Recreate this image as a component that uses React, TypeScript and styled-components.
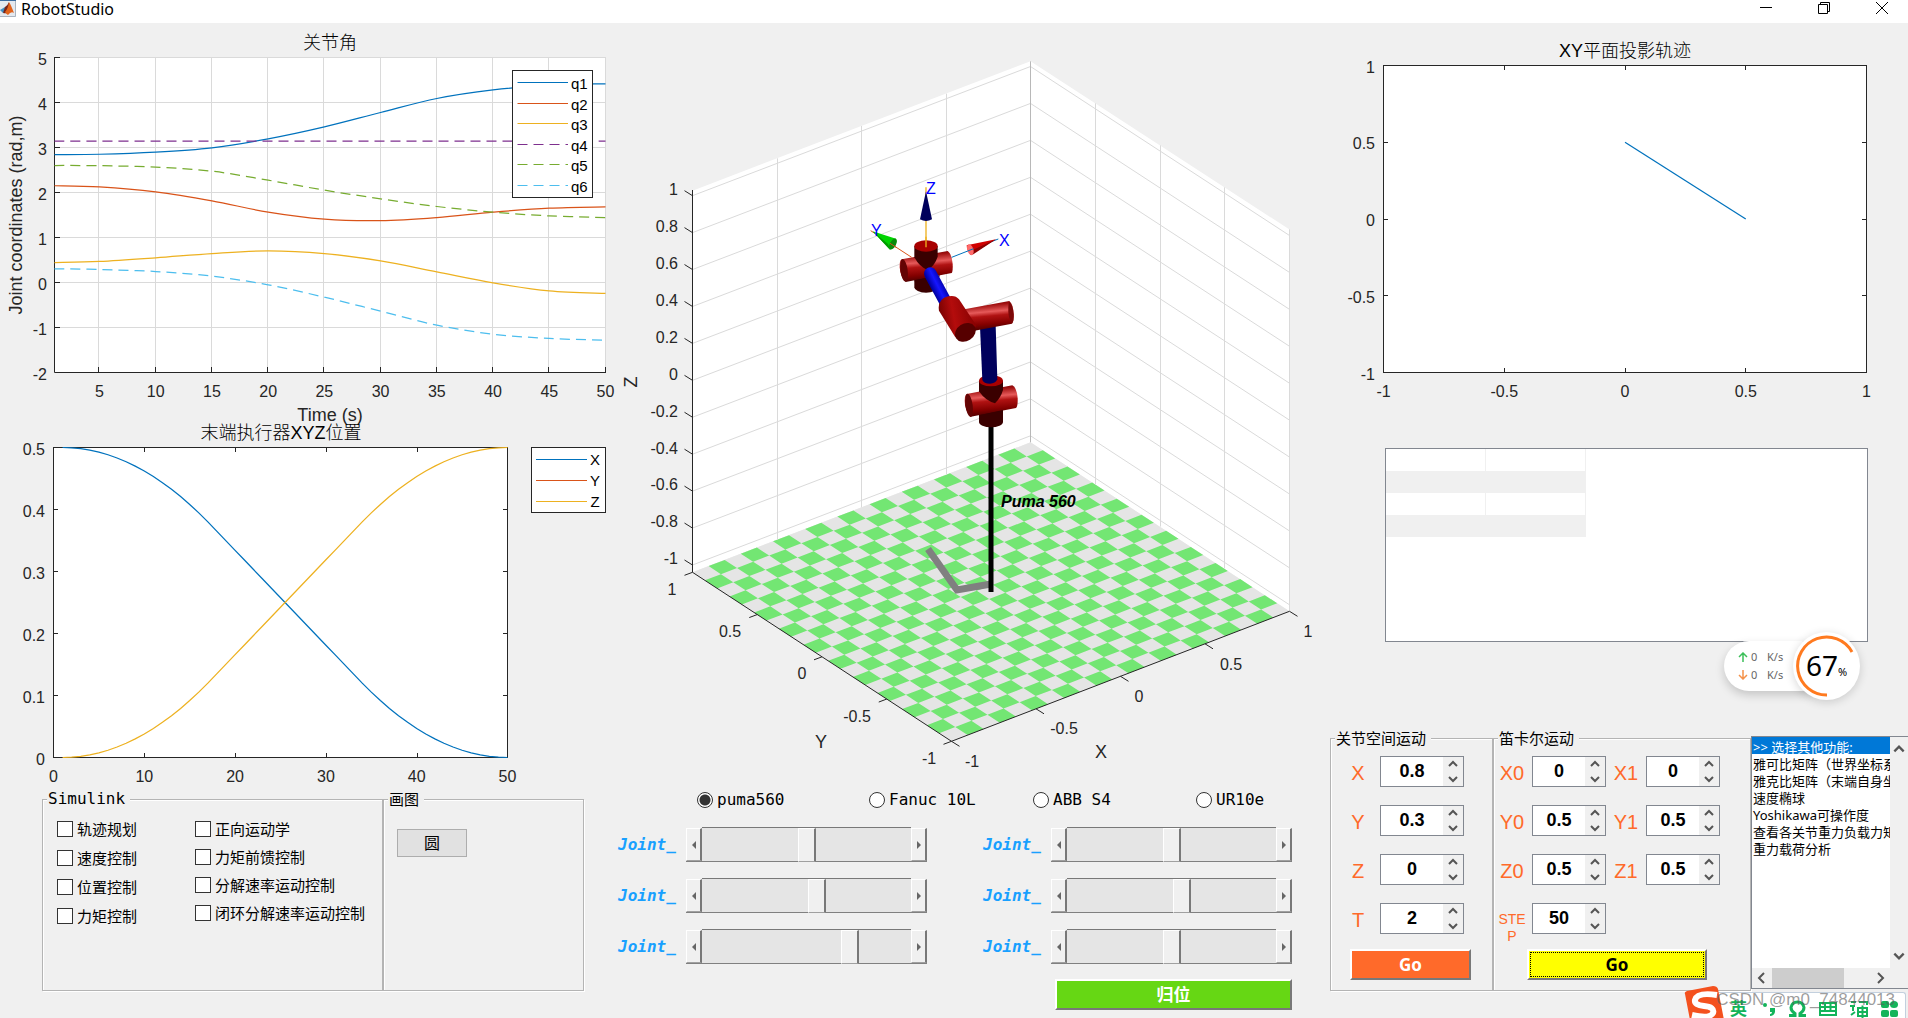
import React, { useState } from 'react';
import styled, { createGlobalStyle } from 'styled-components';

const PLOT = '"Liberation Sans", "Noto Sans CJK SC", sans-serif';
const UI = '"Noto Sans", "Noto Sans CJK SC", sans-serif';
const MONO = '"DejaVu Sans Mono", "Noto Sans CJK SC", monospace';

const BLUE = '#0072bd';
const RED = '#d95319';
const YELLOW = '#edb120';
const PURPLE = '#7e2f8e';
const GREEN = '#77ac30';
const CYAN = '#4dbeee';
const ACCENT = '#ff6a2a';

const GlobalStyle = createGlobalStyle`
  *, *::before, *::after { box-sizing: border-box; }
  body { margin: 0; background: #f0f0f0; font-family: ${UI}; color: #000; }
  button, input, select { font: inherit; color: inherit; margin: 0; }
`;

/* ---------- window frame ---------- */

const Window = styled.div`
  position: relative;
  min-height: 100vh;
  overflow: hidden;
  background: #f0f0f0;
`;

const TitleBar = styled.header`
  display: flex;
  align-items: flex-start;
  height: 23px;
  background: #fff;
`;

const AppTitle = styled.h1`
  flex: 1;
  margin: 0 0 0 5px;
  font-size: 16px;
  line-height: 18px;
  font-weight: 400;
`;

const WindowButton = styled.button`
  width: 58px;
  height: 16px;
  padding: 0 0 0 6px;
  border: 0;
  background: none;
  display: flex;
  justify-content: center;
  align-items: center;
`;

const Columns = styled.main`
  display: grid;
  grid-template-columns: minmax(0, 610fr) minmax(0, 700fr) minmax(0, 598fr);
  align-items: start;
`;

const Column = styled.section`
  display: flex;
  flex-direction: column;
`;

const Plot = styled.svg`
  display: block;
  width: 100%;
  height: auto;
  overflow: visible;
  font-family: ${PLOT};
  font-size: 16px;
  fill: #262626;
`;

/* ---------- grouped controls ---------- */

const Group = styled.fieldset`
  min-width: 0;
  margin: 0;
  padding: 0;
  border: 1px solid #b4b4b4;
  box-shadow: 1px 1px 0 #fff, inset 1px 1px 0 #fff;
`;

const Legend = styled.legend<{ $mono?: boolean }>`
  margin-left: 4px;
  padding: 0 5px 0 1px;
  background: #f0f0f0;
  font-family: ${p => (p.$mono ? MONO : UI)};
  font-size: ${p => (p.$mono ? 16 : 15)}px;
  line-height: 18px;
`;

const LeftGroups = styled.div`
  display: grid;
  grid-template-columns: 341fr 201fr;
  padding: 4px 26px 0 42px;
`;

const CheckColumns = styled.div`
  display: grid;
  grid-template-columns: 138px auto;
  padding: 12px 0 0 14px;
  height: 182px;
`;

const CheckColumn = styled.div<{ $gap: number }>`
  display: flex;
  flex-direction: column;
  gap: ${p => p.$gap}px;
`;

const Check = styled.label`
  display: flex;
  align-items: center;
  gap: 4px;
  height: 18px;
  font-size: 15px;
  line-height: 18px;
  white-space: nowrap;
  input {
    appearance: none;
    width: 16px;
    height: 16px;
    border: 1px solid #333;
    background: #fff;
  }
  input:checked { box-shadow: inset 0 0 0 3px #fff, inset 0 0 0 8px #333; }
`;

const DrawArea = styled.div`
  padding: 21px 0 0 13px;
`;

const FlatButton = styled.button`
  width: 70px;
  height: 28px;
  padding: 0;
  border: 1px solid #adadad;
  background: #e1e1e1;
  font-size: 16px;
  line-height: 24px;
`;

/* ---------- robot choice and joint sliders ---------- */

const RobotChoice = styled.div`
  display: grid;
  grid-template-columns: 172fr 164fr 163fr 114fr;
  padding: 6px 0 0 87px;
`;

const Radio = styled.label`
  display: flex;
  align-items: center;
  gap: 4px;
  height: 24px;
  font-family: ${MONO};
  font-size: 16px;
  line-height: 24px;
  white-space: nowrap;
  input {
    appearance: none;
    width: 16px;
    height: 16px;
    border: 1px solid #333;
    border-radius: 50%;
    background: #fff;
  }
  input:checked { background: radial-gradient(circle, #333 5px, #fff 6px); }
`;

const JointGrid = styled.div`
  display: grid;
  grid-template-columns: 1fr 1fr;
  gap: 16px 56px;
  padding: 15px 18px 0 8px;
`;

const JointRow = styled.div`
  display: grid;
  grid-template-columns: 68px minmax(0, 1fr);
  align-items: center;
  height: 35px;
`;

const JointLabel = styled.label`
  color: #18a0ff;
  font-family: ${MONO};
  font-size: 16px;
  font-style: italic;
  font-weight: 700;
`;

const ScrollBar = styled.div`
  display: flex;
  height: 35px;
  border-bottom: 1px solid #808080;
`;

const ScrollEnd = styled.button`
  display: flex;
  align-items: center;
  justify-content: center;
  width: 16px;
  margin-top: 1px;
  padding: 0;
  border: 1px solid #fff;
  border-right: 2px solid #787878;
  border-bottom-color: #a0a0a0;
  background: #f0f0f0;
`;

const Range = styled.input`
  appearance: none;
  flex: 1;
  min-width: 0;
  height: 34px;
  border-top: 1px solid #787878;
  background: #e5e5e5;
  &::-webkit-slider-thumb {
    appearance: none;
    width: 18px;
    height: 34px;
    border: 1px solid #fff;
    border-right: 2px solid #787878;
    border-bottom-color: #a0a0a0;
    background: #f0f0f0;
  }
`;

const RaisedButton = styled.button<{ $bg: string; $fg: string; $width: number; $dotted?: boolean }>`
  width: ${p => p.$width}px;
  height: 31px;
  padding: 0;
  border: 2px solid #fff;
  border-right-color: #787878;
  border-bottom-color: #787878;
  background: ${p => p.$bg};
  color: ${p => p.$fg};
  font-size: 17px;
  font-weight: 700;
  line-height: 20px;
  outline: ${p => (p.$dotted ? '1px dotted #000' : 'none')};
  outline-offset: -4px;
`;

const HomeRow = styled.div`
  display: flex;
  justify-content: flex-end;
  padding: 15px 18px 0 0;
`;

/* ---------- right column ---------- */

const TableFrame = styled.div`
  height: 194px;
  margin: 23px 40px 0 75px;
  border: 1px solid #828790;
  background: #fff;
`;

const DataTable = styled.table`
  border-collapse: collapse;
  table-layout: fixed;
  width: 200px;
  td {
    height: 22px;
    padding: 0;
    border-right: 1px solid #f0f0f0;
  }
  tr:nth-child(even) td { background: #f0f0f0; }
`;

const MotionRow = styled.div`
  display: grid;
  grid-template-columns: 163fr 258fr 157fr;
  padding: 87px 0 0 20px;
`;

const PoseArea = styled.div`
  height: 243px;
  padding: 9px 0 0 19px;
`;

const StartEndArea = styled.div`
  height: 243px;
  padding: 9px 0 0 4px;
`;

const PoseGrid = styled.div<{ $columns: string; $gap: number }>`
  display: grid;
  grid-template-columns: ${p => p.$columns};
  grid-auto-rows: 31px;
  gap: 18px ${p => p.$gap}px;
`;

const FieldLabel = styled.label<{ $small?: boolean }>`
  align-self: start;
  padding-top: ${p => (p.$small ? 8 : 0)}px;
  color: ${ACCENT};
  font-family: ${PLOT};
  font-size: ${p => (p.$small ? 14 : 20)}px;
  line-height: ${p => (p.$small ? 17 : 34)}px;
  text-align: center;
  word-break: break-all;
`;

const SpinFrame = styled.div`
  display: grid;
  grid-template-columns: minmax(0, 1fr) 20px;
  border: 1px solid #828790;
  background: #fff;
  input {
    appearance: textfield;
    width: 100%;
    padding: 0;
    border: 0;
    background: none;
    font-family: ${PLOT};
    font-size: 18px;
    font-weight: 700;
    text-align: center;
  }
  input::-webkit-inner-spin-button { appearance: none; }
`;

const SpinButtons = styled.div`
  display: grid;
  grid-template-rows: 1fr 1fr;
  background: #f0f0f0;
`;

const GlyphButton = styled.button`
  display: flex;
  align-items: center;
  justify-content: center;
  padding: 0;
  border: 0;
  background: none;
`;

const GoRow = styled.div<{ $indent: number }>`
  padding: 15px 0 0 ${p => p.$indent}px;
`;

const ListFrame = styled.div`
  display: grid;
  grid-template-columns: minmax(0, 1fr) 18px;
  grid-template-rows: minmax(0, 1fr) 20px;
  height: 253px;
  margin-top: 7px;
  border: 1px solid #828790;
  border-right: 0;
  background: #f0f0f0;
`;

const FunctionList = styled.select`
  width: 100%;
  height: 100%;
  padding: 0;
  border: 0;
  border-radius: 0;
  outline: 0;
  background: #fff;
  overflow: hidden;
  font-size: 13px;
  option {
    height: 17px;
    min-height: 17px;
    padding: 0 0 0 1px;
    line-height: 13px;
    overflow: hidden;
  }
  option:checked {
    background: #0078d7 linear-gradient(#0078d7, #0078d7);
    color: #fff;
    -webkit-text-fill-color: #fff;
  }
`;

const VerticalScroll = styled.div`
  display: flex;
  flex-direction: column;
  justify-content: space-between;
  padding: 5px 0;
`;

const HorizontalScroll = styled.div`
  display: grid;
  grid-template-columns: 20px 72px 1fr 20px;
`;

const ScrollThumb = styled.div`
  background: #cdcdcd;
`;

/* ---------- floating desktop widgets ---------- */

const NetWidget = styled.aside`
  position: absolute;
  top: 632px;
  right: 48px;
  display: flex;
  align-items: center;
`;

const NetPill = styled.div`
  width: 103px;
  height: 50px;
  margin-right: -34px;
  padding: 7px 0 7px 14px;
  border-radius: 25px;
  background: #fff;
  box-shadow: 0 4px 10px rgba(0, 0, 0, 0.18);
`;

const Speed = styled.div`
  display: grid;
  grid-template-columns: 13px 16px auto;
  align-items: center;
  color: #666;
  font-size: 11px;
  line-height: 18px;
`;

const Dial = styled.div`
  position: relative;
  display: flex;
  align-items: baseline;
  justify-content: center;
  width: 67px;
  height: 68px;
  border-radius: 50%;
  background: #fff;
  box-shadow: 0 2px 10px rgba(0, 0, 0, 0.16);
  font-size: 28px;
  line-height: 66px;
  svg { position: absolute; inset: 0; }
  small { font-size: 11px; }
`;

const InputBar = styled.aside`
  position: absolute;
  right: 2px;
  top: 992px;
  display: flex;
  align-items: flex-end;
  gap: 13px;
  width: 196px;
  height: 26px;
  padding: 0 6px 0 19px;
  border: 1px solid #c3d0de;
  border-bottom: 0;
  border-radius: 3px 3px 0 0;
  background: #fff;
  color: #14b45a;
  font-size: 17px;
  font-weight: 700;
  line-height: 19px;
  svg { flex: none; }
`;

const InputLogo = styled.svg`
  position: absolute;
  left: -27px;
  top: -7px;
`;

const Watermark = styled.div`
  position: absolute;
  right: 13px;
  top: 990px;
  color: rgba(90, 90, 90, 0.6);
  font-family: ${PLOT};
  font-size: 17px;
  line-height: 20px;
`;

/* ---------- helpers ---------- */

type Point = [number, number];

const linePath = (pts: Point[]) =>
  pts.map(([x, y], i) => `${i ? 'L' : 'M'}${x.toFixed(2)} ${y.toFixed(2)}`).join('');

const smoothPath = (pts: Point[]) => {
  let d = `M${pts[0][0].toFixed(2)} ${pts[0][1].toFixed(2)}`;
  for (let i = 0; i < pts.length - 1; i++) {
    const a = pts[Math.max(0, i - 1)];
    const b = pts[i];
    const c = pts[i + 1];
    const e = pts[Math.min(pts.length - 1, i + 2)];
    const c1 = [b[0] + (c[0] - a[0]) / 6, b[1] + (c[1] - a[1]) / 6];
    const c2 = [c[0] - (e[0] - b[0]) / 6, c[1] - (e[1] - b[1]) / 6];
    d += `C${[...c1, ...c2, ...c].map(n => n.toFixed(2)).join(' ')}`;
  }
  return d;
};

const Chevron = ({ dir, size = 12 }: { dir: 'up' | 'down' | 'left' | 'right'; size?: number }) => {
  const d = {
    up: 'M2 8L6 4L10 8',
    down: 'M2 4L6 8L10 4',
    left: 'M8 1L3 6L8 11',
    right: 'M4 1L9 6L4 11',
  }[dir];
  return (
    <svg width={size} height={size} viewBox="0 0 12 12" fill="none" stroke="#555" strokeWidth="2">
      <path d={d} />
    </svg>
  );
};

/* ---------- joint angle chart ---------- */

const TIMES = [1, 5, 10, 15, 20, 25, 30, 35, 40, 45, 50];

const JOINTS = [
  { name: 'q1', color: BLUE, dash: false, v: [2.844, 2.85, 2.896, 2.993, 3.193, 3.459, 3.778, 4.089, 4.28, 4.385, 4.415] },
  { name: 'q2', color: RED, dash: false, v: [2.15, 2.126, 2.015, 1.815, 1.563, 1.407, 1.375, 1.444, 1.563, 1.652, 1.68] },
  { name: 'q3', color: YELLOW, dash: false, v: [0.444, 0.467, 0.548, 0.644, 0.704, 0.644, 0.481, 0.237, -0.007, -0.185, -0.244] },
  { name: 'q4', color: PURPLE, dash: true, v: TIMES.map(() => 3.144) },
  { name: 'q5', color: GREEN, dash: true, v: [2.6, 2.596, 2.563, 2.474, 2.274, 2.052, 1.859, 1.689, 1.563, 1.481, 1.444] },
  { name: 'q6', color: CYAN, dash: true, v: [0.304, 0.289, 0.244, 0.141, -0.052, -0.326, -0.637, -0.948, -1.148, -1.244, -1.281] },
];

const JointChart = () => {
  const x = (t: number) => 54.5 + ((t - 1) / 49) * 551;
  const y = (v: number) => 57.5 + (5 - v) * 45;
  return (
    <Plot viewBox="0 23 610 402" role="img" aria-label="关节角">
      <rect x="54" y="57" width="552" height="316" fill="#fff" />
      <g stroke="#dadada">
        {TIMES.slice(1).map(t => <path key={t} d={`M${Math.round(x(t)) - 0.5} 57V372`} />)}
        {[5, 4, 3, 2, 1, 0, -1].map(v => <path key={v} d={`M54 ${y(v)}H606`} />)}
      </g>
      <g stroke="#262626" fill="none">
        <path d="M54.5 57V372.5H606" />
        {TIMES.slice(1).map(t => <path key={t} d={`M${Math.round(x(t)) - 0.5} 372v-5`} />)}
        {[5, 4, 3, 2, 1, 0, -1].map(v => <path key={v} d={`M54 ${y(v)}h6`} />)}
      </g>
      {JOINTS.map(j => (
        <path
          key={j.name}
          d={smoothPath(TIMES.map((t, i) => [x(t), y(j.v[i])] as Point))}
          fill="none"
          stroke={j.color}
          strokeWidth="1.25"
          strokeDasharray={j.dash ? '10 6' : undefined}
        />
      ))}
      <text x="330" y="49" textAnchor="middle" fontSize="18" fontWeight="300" fill="#000">关节角</text>
      {TIMES.slice(1).map(t => <text key={t} x={x(t)} y="397" textAnchor="middle">{t}</text>)}
      {[5, 4, 3, 2, 1, 0, -1, -2].map(v => (
        <text key={v} x="47" y={y(v) + 7} textAnchor="end">{v}</text>
      ))}
      <text x="330" y="421" textAnchor="middle" fontSize="18">Time (s)</text>
      <text transform="translate(22 215) rotate(-90)" textAnchor="middle" fontSize="18">
        Joint coordinates (rad,m)
      </text>
      <rect x="512.5" y="70.5" width="80" height="127" fill="#fff" stroke="#262626" />
      {JOINTS.map((j, i) => {
        const ly = 82.5 + Math.round(i * 20.6);
        return (
          <g key={j.name}>
            <path d={`M517.5 ${ly}H568`} stroke={j.color} strokeDasharray={j.dash ? '10 6' : undefined} />
            <text x="571" y={ly + 6} fontSize="15" fill="#000">{j.name}</text>
          </g>
        );
      })}
    </Plot>
  );
};

/* ---------- end effector chart ---------- */

const blend = (s: number) => {
  if (s < 1 / 3) return 2.25 * s * s;
  if (s > 2 / 3) return 1 - 2.25 * (1 - s) * (1 - s);
  return 0.25 + 1.5 * (s - 1 / 3);
};

const PositionChart = () => {
  const x = (t: number) => 53.5 + t * 9.08;
  const y = (v: number) => 757.5 - v * 620;
  const steps = Array.from({ length: 50 }, (_, i) => i + 1);
  const rising = steps.map(t => [x(t), y(0.5 * blend((t - 1) / 49))] as Point);
  const falling = steps.map(t => [x(t), y(0.5 - 0.5 * blend((t - 1) / 49))] as Point);
  return (
    <Plot viewBox="0 425 610 361" role="img" aria-label="末端执行器XYZ位置">
      <rect x="53.5" y="447.5" width="454" height="310" fill="#fff" stroke="#262626" />
      <g stroke="#262626">
        {[10, 20, 30, 40].map(t => (
          <path key={t} d={`M${Math.round(x(t)) + 0.5} 757v-4M${Math.round(x(t)) + 0.5} 448v4`} />
        ))}
        {[0.1, 0.2, 0.3, 0.4].map(v => <path key={v} d={`M54 ${y(v)}h4M507 ${y(v)}h-4`} />)}
      </g>
      <path d={linePath(falling)} fill="none" stroke={BLUE} strokeWidth="1.25" />
      <path d={linePath(rising)} fill="none" stroke={YELLOW} strokeWidth="1.25" />
      <text x="281" y="439" textAnchor="middle" fontSize="18" fontWeight="300" fill="#000">
        末端执行器XYZ位置
      </text>
      {[0, 10, 20, 30, 40, 50].map(t => <text key={t} x={x(t)} y="782" textAnchor="middle">{t}</text>)}
      {[0, 0.1, 0.2, 0.3, 0.4, 0.5].map(v => (
        <text key={v} x="45" y={y(v) + 7} textAnchor="end">{v}</text>
      ))}
      <rect x="531.5" y="447.5" width="74" height="65" fill="#fff" stroke="#262626" />
      {[['X', BLUE], ['Y', RED], ['Z', YELLOW]].map(([name, color], i) => (
        <g key={name}>
          <path d={`M536 ${459.5 + i * 21}h51`} stroke={color} />
          <text x="595" y={465 + i * 21} textAnchor="middle" fontSize="15" fill="#000">{name}</text>
        </g>
      ))}
    </Plot>
  );
};

/* ---------- 3D view ---------- */

const LEFT: Point = [692.5, 572.3];
const U: Point = [338, -130];
const V: Point = [259, 169];
const N = 21;

const floorPoint = (u: number, v: number): Point => [
  LEFT[0] + U[0] * u + V[0] * v,
  LEFT[1] + U[1] * u + V[1] * v,
];

const tiles = () => {
  let d = '';
  for (let i = 0; i < N; i++) {
    for (let j = 0; j < N; j++) {
      if ((i + j) % 2 === 0) continue;
      d += linePath([
        floorPoint(i / N, j / N),
        floorPoint((i + 1) / N, j / N),
        floorPoint((i + 1) / N, (j + 1) / N),
        floorPoint(i / N, (j + 1) / N),
      ]) + 'Z';
    }
  }
  return d;
};

const Z_TICKS = ['1', '0.8', '0.6', '0.4', '0.2', '0', '-0.2', '-0.4', '-0.6', '-0.8', '-1'];
const QUARTERS = [0, 1, 2, 3, 4];

const RobotArm = () => (
  <g>
    <defs>
      <linearGradient id="tube" x1="0.42" y1="0" x2="0.58" y2="1">
        <stop offset="0" stopColor="#6a0000" />
        <stop offset="0.14" stopColor="#a01010" />
        <stop offset="0.36" stopColor="#e65a5a" />
        <stop offset="0.5" stopColor="#b01212" />
        <stop offset="0.75" stopColor="#840000" />
        <stop offset="1" stopColor="#3c0000" />
      </linearGradient>
      <linearGradient id="elbow" x1="0" y1="0.6" x2="1" y2="0.4">
        <stop offset="0" stopColor="#700000" />
        <stop offset="0.4" stopColor="#b40c0c" />
        <stop offset="1" stopColor="#820000" />
      </linearGradient>
      <linearGradient id="link" gradientUnits="userSpaceOnUse" x1="277" y1="360" x2="313" y2="342">
        <stop offset="0" stopColor="#0000a0" />
        <stop offset="0.5" stopColor="#1616ff" />
        <stop offset="1" stopColor="#0000a8" />
      </linearGradient>
    </defs>
    <path d="M991 425V592" stroke="#000" strokeWidth="5" />
    <g transform="translate(840 170) scale(0.33333)">
      <path d="M417 690V756A36 16 0 0 0 489 756V690Z" fill="#3a0000" />
      <path d="M380 672L517 646Q530 652 533 684Q534 708 528 714L392 740Q374 720 374 692Q374 676 380 672Z" fill="url(#tube)" />
      <ellipse cx="387" cy="706" rx="11" ry="35" transform="rotate(-8 387 706)" fill="#640404" />
      <path d="M417 632V664Q436 692 465 700Q482 684 489 660V632Z" fill="#3a0000" />
      <path d="M417 736L489 720V750H417Z" fill="#3a0000" />
      <ellipse cx="453" cy="632" rx="36" ry="17" fill="#a80000" />
      <path d="M420 470L467 468L472 628Q466 641 450 641Q431 641 427 630Z" fill="#00005c" />
      <path d="M365 419L508 393Q519 402 521 432Q522 454 516 461L395 484Z" fill="url(#tube)" />
      <path d="M508 395Q519 402 521 432Q522 454 516 460Q506 448 505 425Q504 402 508 395Z" fill="#7c0808" />
      <path d="M223 320V352A35 16 0 0 0 293 352V320Z" fill="#3a0000" />
      <path d="M185 268L323 243Q336 252 338 282Q339 304 335 309L197 336Q181 320 179 292Q178 272 185 268Z" fill="url(#tube)" />
      <ellipse cx="192" cy="301" rx="11" ry="34" transform="rotate(-8 192 301)" fill="#640404" />
      <path d="M258 52V228" stroke={YELLOW} strokeWidth="4" />
      <path d="M223 228V262Q238 290 262 300Q284 288 293 260V228Z" fill="#3a0000" />
      <ellipse cx="258" cy="228" rx="35" ry="17" fill="#a80000" />
      <path d="M258 200V232" stroke={YELLOW} strokeWidth="4" />
      <path d="M223 331L300 316L290 340Q270 362 230 350Z" fill="#3a0000" />
      <path d="M271 311L320 402" stroke="url(#link)" strokeWidth="38" strokeLinecap="round" />
      <path d="M296 414Q296 386 325 379Q346 374 357 388L410 468L346 502L297 422Z" fill="url(#elbow)" />
      <ellipse cx="376" cy="487" rx="33" ry="26" transform="rotate(-32 376 487)" fill="#560000" />
      <path d="M258 64L276 148Q258 158 240 148Z" fill="#00005c" />
      <path d="M335 262L475 207" stroke={BLUE} strokeWidth="3" />
      <path d="M468 208L380 226Q380 240 392 255Z" fill="#d00000" />
      <path d="M468 208L400 253L391 255L398 240Z" fill="#8c0000" />
      <ellipse cx="391" cy="239" rx="9" ry="17" transform="rotate(-18 391 239)" fill="#ff6a6a" />
      <path d="M383 243l18-7" stroke={BLUE} strokeWidth="3" />
      <path d="M92 182L215 262" stroke={RED} strokeWidth="3" />
      <path d="M98 184L168 206Q176 222 150 239Z" fill="#00d400" />
      <path d="M98 184L150 239L144 222Z" fill="#009a00" />
      <ellipse cx="159" cy="222" rx="9" ry="18" transform="rotate(28 159 222)" fill="#0a8a0a" />
      <path d="M150 220L170 233" stroke={RED} strokeWidth="3" />
    </g>
    <g fill="#00f">
      <text x="926" y="194">Z</text>
      <text x="871" y="236">Y</text>
      <text x="999" y="246">X</text>
    </g>
  </g>
);

const RobotView = () => (
  <Plot viewBox="610 23 700 759" role="img" aria-label="Puma 560">
    <path d="M692.5 190.7L1030.5 61.3L1289.5 229.5V611.3L1030.5 442.3L692.5 572.3Z" fill="#fff" />
    <path d={linePath([floorPoint(0, 0), floorPoint(1, 0), floorPoint(1, 1), floorPoint(0, 1)]) + 'Z'} fill="#e5e5e5" />
    <path d={tiles()} fill="#73e673" />
    <g stroke="#dadada" fill="none">
      {Z_TICKS.map((z, i) => (
        <path key={z} d={`M692.5 ${195.7 + i * 36.93}l338 -129.2l259 169`} />
      ))}
      {[1, 2, 3].map(q => (
        <path key={q} d={`M${Math.round(692 + q * 84.5) + 0.5} ${190.7 - q * 32.35}v381.3`} />
      ))}
      {[1, 2, 3, 4].map(q => (
        <path key={q} d={`M${Math.round(1030 + q * 64.8) + 0.5} ${61.3 + q * 42}v381.3`} />
      ))}
      <path d="M1030.5 61.3V442.3" stroke="#b8b8b8" />
    </g>
    <g stroke="#262626" fill="none">
      <path d="M692.5 190V572.3L951.5 741.3L1289.5 611.3" />
      {Z_TICKS.map((z, i) => <path key={z} d={`M692.5 ${195.7 + i * 36.93}l-8 -5`} />)}
      {QUARTERS.map(q => {
        const [lx, ly] = floorPoint(0, q / 4);
        const [rx, ry] = floorPoint(q / 4, 1);
        return <path key={q} d={`M${lx} ${ly}l-8 3M${rx} ${ry}l8 5`} />;
      })}
    </g>
    {Z_TICKS.map((z, i) => (
      <text key={z} x="678" y={195 + i * 36.93} textAnchor="end">{z}</text>
    ))}
    <g textAnchor="middle">
      <text x="672" y="595">1</text>
      <text x="730" y="637">0.5</text>
      <text x="802" y="679">0</text>
      <text x="857" y="722">-0.5</text>
      <text x="929" y="764">-1</text>
      <text x="972" y="767">-1</text>
      <text x="1064" y="734">-0.5</text>
      <text x="1139" y="702">0</text>
      <text x="1231" y="670">0.5</text>
      <text x="1308" y="637">1</text>
      <g fontSize="18">
        <text x="821" y="748">Y</text>
        <text x="1101" y="758">X</text>
        <text transform="translate(637 382) rotate(-90)">Z</text>
      </g>
    </g>
    <path d="M928 549L957 590L991 584" fill="none" stroke="#808080" strokeWidth="7" />
    <RobotArm />
    <text x="1001" y="507" fontStyle="italic" fontWeight="700" fill="#000">Puma 560</text>
  </Plot>
);

/* ---------- XY projection ---------- */

const ProjectionChart = () => {
  const x = (v: number) => 1625 + v * 241.5;
  const y = (v: number) => 219 - v * 153.5;
  const ticks = [-1, -0.5, 0, 0.5, 1];
  return (
    <Plot viewBox="1310 23 598 402" role="img" aria-label="XY平面投影轨迹">
      <rect x="1383.5" y="65.5" width="483" height="307" fill="#fff" stroke="#262626" />
      <g stroke="#262626">
        {ticks.slice(1, 4).map(v => {
          const px = Math.floor(x(v)) + 0.5;
          const py = Math.floor(y(v)) + 0.5;
          return <path key={v} d={`M${px} 372v-4M${px} 66v4M1384 ${py}h4M1866 ${py}h-4`} />;
        })}
      </g>
      <path d={linePath([[x(0), y(0.5)], [x(0.5), y(0)]])} stroke={BLUE} strokeWidth="1.25" />
      <text x="1625" y="57" textAnchor="middle" fontSize="18" fontWeight="300" fill="#000">
        XY平面投影轨迹
      </text>
      {ticks.map(v => (
        <g key={v}>
          <text x={x(v)} y="397" textAnchor="middle">{v}</text>
          <text x="1375" y={y(v) + 7} textAnchor="end">{v}</text>
        </g>
      ))}
    </Plot>
  );
};

/* ---------- control pieces ---------- */

const Spinner = ({ id, initial }: { id: string; initial: number }) => {
  const [value, setValue] = useState(initial);
  const bump = (d: number) => setValue(v => Math.round((v + d) * 10) / 10);
  return (
    <SpinFrame>
      <input id={id} type="number" step="0.1" value={value} onChange={e => setValue(Number(e.target.value))} />
      <SpinButtons>
        <GlyphButton type="button" aria-label="增加" onClick={() => bump(0.1)}><Chevron dir="up" /></GlyphButton>
        <GlyphButton type="button" aria-label="减少" onClick={() => bump(-0.1)}><Chevron dir="down" /></GlyphButton>
      </SpinButtons>
    </SpinFrame>
  );
};

const Joint = ({ index, initial }: { index: number; initial: number }) => {
  const [value, setValue] = useState(initial);
  const id = `joint-${index}`;
  return (
    <JointRow>
      <JointLabel htmlFor={id}>Joint_</JointLabel>
      <ScrollBar>
        <ScrollEnd type="button" aria-label="减小" onClick={() => setValue(v => v - 10)}>
          <svg width="6" height="8" viewBox="0 0 6 8"><path d="M5 0V8L1 4Z" fill="#666" /></svg>
        </ScrollEnd>
        <Range id={id} type="range" min={0} max={1000} value={value} onChange={e => setValue(Number(e.target.value))} />
        <ScrollEnd type="button" aria-label="增大" onClick={() => setValue(v => v + 10)}>
          <svg width="6" height="8" viewBox="0 0 6 8"><path d="M1 0V8L5 4Z" fill="#666" /></svg>
        </ScrollEnd>
      </ScrollBar>
    </JointRow>
  );
};

const JOINT_VALUES = [505, 505, 557, 555, 730, 505];
const ROBOTS = ['puma560', 'Fanuc 10L', 'ABB S4', 'UR10e'];
const CHECKS_A = ['轨迹规划', '速度控制', '位置控制', '力矩控制'];
const CHECKS_B = ['正向运动学', '力矩前馈控制', '分解速率运动控制', '闭环分解速率运动控制'];
const FUNCTIONS = [
  '>> 选择其他功能:',
  '雅可比矩阵（世界坐标系）',
  '雅克比矩阵（末端自身坐标系）',
  '速度椭球',
  'Yoshikawa可操作度',
  '查看各关节重力负载力矩',
  '重力载荷分析',
];
const POSE: [string, number][] = [['X', 0.8], ['Y', 0.3], ['Z', 0], ['T', 2]];
const START_END: [string, number][] = [
  ['X0', 0], ['X1', 0], ['Y0', 0.5], ['Y1', 0.5], ['Z0', 0.5], ['Z1', 0.5], ['STEP', 50],
];

export default function App() {
  const [robot, setRobot] = useState(ROBOTS[0]);
  return (
    <Window>
      <GlobalStyle />
      <TitleBar>
        <svg width="16" height="17" viewBox="0 0 16 17">
          <rect width="16" height="17" fill="#e4e9ef" />
          <path d="M0 0H15.5V16.5H0" fill="none" stroke="#a9b4c0" />
          <path d="M0 .5H16" stroke="#3c6da0" />
          <path d="M0 10L5 7L7 9L3 13Z" fill="#3f8fc4" />
          <path d="M5 7Q8 5 9 2L9 12Q7 14 3 13Z" fill="#7a2418" />
          <path d="M9 2Q11 5 14 13Q11 11 8 15Q6 14 5 12Q8 9 9 2Z" fill="#e2641c" />
        </svg>
        <AppTitle>RobotStudio</AppTitle>
        <WindowButton aria-label="最小化">
          <svg width="12" height="12"><path d="M0 5.5H12" stroke="#000" /></svg>
        </WindowButton>
        <WindowButton aria-label="还原">
          <svg width="12" height="12" fill="none" stroke="#000">
            <path d="M.5 2.5H9.5V11.5H.5ZM2.5 2V.5H11.5V9.5H10" />
          </svg>
        </WindowButton>
        <WindowButton aria-label="关闭">
          <svg width="12" height="12"><path d="M0 0L12 12M12 0L0 12" stroke="#000" /></svg>
        </WindowButton>
      </TitleBar>

      <Columns>
        <Column>
          <JointChart />
          <PositionChart />
          <LeftGroups>
            <Group>
              <Legend $mono>Simulink</Legend>
              <CheckColumns>
                <CheckColumn $gap={11}>
                  {CHECKS_A.map(c => <Check key={c}><input type="checkbox" />{c}</Check>)}
                </CheckColumn>
                <CheckColumn $gap={10}>
                  {CHECKS_B.map(c => <Check key={c}><input type="checkbox" />{c}</Check>)}
                </CheckColumn>
              </CheckColumns>
            </Group>
            <Group>
              <Legend>画图</Legend>
              <DrawArea><FlatButton type="button">圆</FlatButton></DrawArea>
            </Group>
          </LeftGroups>
        </Column>

        <Column>
          <RobotView />
          <RobotChoice>
            {ROBOTS.map(r => (
              <Radio key={r}>
                <input type="radio" name="robot" checked={robot === r} onChange={() => setRobot(r)} />
                {r}
              </Radio>
            ))}
          </RobotChoice>
          <JointGrid>
            {JOINT_VALUES.map((v, i) => <Joint key={i} index={i + 1} initial={v} />)}
          </JointGrid>
          <HomeRow>
            <RaisedButton type="button" $bg="#66d714" $fg="#fff" $width={237}>归位</RaisedButton>
          </HomeRow>
        </Column>

        <Column>
          <ProjectionChart />
          <TableFrame>
            <DataTable>
              <tbody>
                {[0, 1, 2, 3].map(r => <tr key={r}><td /><td /></tr>)}
              </tbody>
            </DataTable>
          </TableFrame>
          <MotionRow>
            <Group>
              <Legend>关节空间运动</Legend>
              <PoseArea>
                <PoseGrid $columns="16px 84px" $gap={14}>
                  {POSE.map(([name, v]) => (
                    <React.Fragment key={name}>
                      <FieldLabel htmlFor={`pose-${name}`}>{name}</FieldLabel>
                      <Spinner id={`pose-${name}`} initial={v} />
                    </React.Fragment>
                  ))}
                </PoseGrid>
                <GoRow $indent={0}>
                  <RaisedButton type="button" $bg={ACCENT} $fg="#fff" $width={121}>Go</RaisedButton>
                </GoRow>
              </PoseArea>
            </Group>
            <Group>
              <Legend>笛卡尔运动</Legend>
              <StartEndArea>
                <PoseGrid $columns="28px 74px 28px 74px" $gap={6}>
                  {START_END.map(([name, v]) => (
                    <React.Fragment key={name}>
                      <FieldLabel htmlFor={`path-${name}`} $small={name === 'STEP'}>{name}</FieldLabel>
                      <Spinner id={`path-${name}`} initial={v} />
                    </React.Fragment>
                  ))}
                </PoseGrid>
                <GoRow $indent={29}>
                  <RaisedButton type="button" $bg="#ff0" $fg="#000" $width={180} $dotted>Go</RaisedButton>
                </GoRow>
              </StartEndArea>
            </Group>
            <ListFrame>
              <FunctionList size={13} defaultValue={FUNCTIONS[0]} aria-label="选择其他功能">
                {FUNCTIONS.map(f => <option key={f}>{f}</option>)}
              </FunctionList>
              <VerticalScroll>
                <GlyphButton type="button" aria-label="向上"><Chevron dir="up" size={14} /></GlyphButton>
                <GlyphButton type="button" aria-label="向下"><Chevron dir="down" size={14} /></GlyphButton>
              </VerticalScroll>
              <HorizontalScroll>
                <GlyphButton type="button" aria-label="向左"><Chevron dir="left" size={12} /></GlyphButton>
                <ScrollThumb />
                <span />
                <GlyphButton type="button" aria-label="向右"><Chevron dir="right" size={12} /></GlyphButton>
              </HorizontalScroll>
            </ListFrame>
          </MotionRow>
        </Column>
      </Columns>

      <NetWidget>
        <NetPill>
          <Speed>
            <svg width="10" height="10" fill="none" stroke="#3cbf5a" strokeWidth="1.5"><path d="M5 10V1M1 5L5 1L9 5" /></svg>
            <span>0</span><span>K/s</span>
          </Speed>
          <Speed>
            <svg width="10" height="10" fill="none" stroke="#f5924a" strokeWidth="1.5"><path d="M5 0V9M1 5L5 9L9 5" /></svg>
            <span>0</span><span>K/s</span>
          </Speed>
        </NetPill>
        <Dial>
          <svg width="67" height="68" viewBox="0 0 67 68" fill="none" stroke="#ff7a1f" strokeWidth="3">
            <path d="M34 63A29 29 0 1 1 59 20" />
          </svg>
          67<small>%</small>
        </Dial>
      </NetWidget>

      <InputBar>
        <InputLogo width="40" height="40" viewBox="0 0 40 40">
          <path d="M1 8Q0 6 3 5L29 0Q33 0 34 3L40 34H6Z" fill="#f4511e" />
          <path d="M33 9Q13 6 11 14Q10 19 20 20Q31 21 29 27Q26 33 8 29" fill="none" stroke="#fff" strokeWidth="6" />
        </InputLogo>
        <span>英</span>
        <svg width="16" height="18" fill="#14b45a"><circle cx="5" cy="5" r="2" /><path d="M10 8h5v4q-1 4-5 4v-2q2 0 2-2h-2z" /></svg>
        <svg width="17" height="18" fill="none" stroke="#14b45a" strokeWidth="3"><path d="M0 15.500h6v-2Q2 11 2 7.500Q3 2 8.500 2T15 7.500Q15 11 11 13.500v2h6" /></svg>
        <svg width="18" height="18" fill="none" stroke="#14b45a" strokeWidth="2"><path d="M1 3H17V15H1ZM1 7H17M1 11H17M6 3V11M11.500 3V11" /></svg>
        <svg width="18" height="18" fill="none" stroke="#14b45a" strokeWidth="2"><path d="M8 8H17V16H8ZM12.500 5.500V18M1 2h5M0 6h5M3 6v5M9 2h8v3M5 12l-4 3M8 12h9" /></svg>
        <svg width="17" height="18" fill="#14b45a"><rect y="1" width="8" height="7" rx="2" /><rect x="9" y="1" width="8" height="7" rx="4" /><rect y="10" width="8" height="7" rx="2" /><rect x="9" y="10" width="8" height="7" rx="2" /></svg>
      </InputBar>
      <Watermark>CSDN @m0_74844013</Watermark>
    </Window>
  );
}
